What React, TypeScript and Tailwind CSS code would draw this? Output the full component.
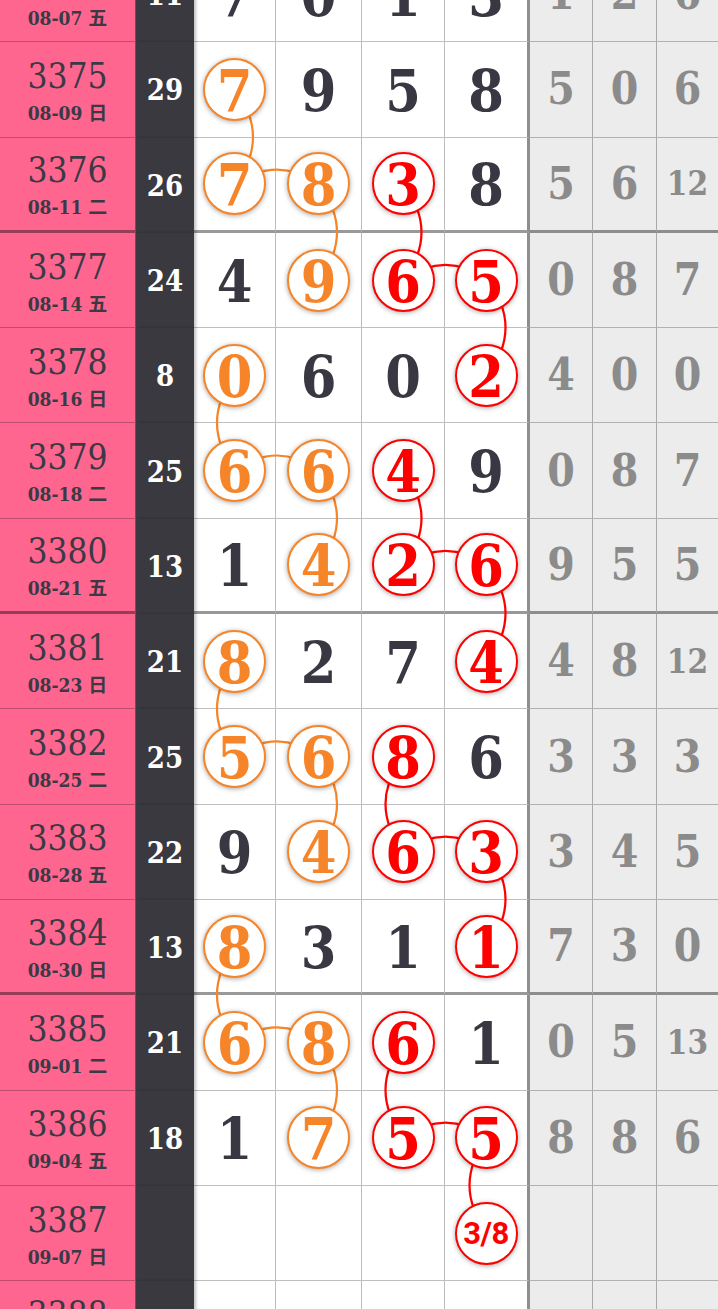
import React from 'react';

type Row = {
  n: string;
  d: string;
  s: string;
  v: string[];
  g: string[];
  o: number[];
  r: number[];
};

const rows: Row[] = [
  { n: '3374', d: '08-07 五', s: '11', v: ['7', '0', '1', '3'], g: ['1', '2', '6'], o: [], r: [] },
  { n: '3375', d: '08-09 日', s: '29', v: ['7', '9', '5', '8'], g: ['5', '0', '6'], o: [0], r: [] },
  { n: '3376', d: '08-11 二', s: '26', v: ['7', '8', '3', '8'], g: ['5', '6', '12'], o: [0, 1], r: [2] },
  { n: '3377', d: '08-14 五', s: '24', v: ['4', '9', '6', '5'], g: ['0', '8', '7'], o: [1], r: [2, 3] },
  { n: '3378', d: '08-16 日', s: '8', v: ['0', '6', '0', '2'], g: ['4', '0', '0'], o: [0], r: [3] },
  { n: '3379', d: '08-18 二', s: '25', v: ['6', '6', '4', '9'], g: ['0', '8', '7'], o: [0, 1], r: [2] },
  { n: '3380', d: '08-21 五', s: '13', v: ['1', '4', '2', '6'], g: ['9', '5', '5'], o: [1], r: [2, 3] },
  { n: '3381', d: '08-23 日', s: '21', v: ['8', '2', '7', '4'], g: ['4', '8', '12'], o: [0], r: [3] },
  { n: '3382', d: '08-25 二', s: '25', v: ['5', '6', '8', '6'], g: ['3', '3', '3'], o: [0, 1], r: [2] },
  { n: '3383', d: '08-28 五', s: '22', v: ['9', '4', '6', '3'], g: ['3', '4', '5'], o: [1], r: [2, 3] },
  { n: '3384', d: '08-30 日', s: '13', v: ['8', '3', '1', '1'], g: ['7', '3', '0'], o: [0], r: [3] },
  { n: '3385', d: '09-01 二', s: '21', v: ['6', '8', '6', '1'], g: ['0', '5', '13'], o: [0, 1], r: [2] },
  { n: '3386', d: '09-04 五', s: '18', v: ['1', '7', '5', '5'], g: ['8', '8', '6'], o: [1], r: [2, 3] },
  { n: '3387', d: '09-07 日', s: '', v: ['', '', '', '3/8'], g: ['', '', ''], o: [], r: [3] },
  { n: '3388', d: '09-09 二', s: '', v: ['', '', '', ''], g: ['', '', ''], o: [], r: [] },
];

// [fromRow, fromCol, toRow, toCol, bow]
type Seg = [number, number, number, number, 'L' | 'R' | 'U'];

const orangeSegs: Seg[] = [
  [1, 0, 2, 0, 'R'], [2, 0, 2, 1, 'U'], [2, 1, 3, 1, 'R'],
  [4, 0, 5, 0, 'L'], [5, 0, 5, 1, 'U'], [5, 1, 6, 1, 'R'],
  [7, 0, 8, 0, 'L'], [8, 0, 8, 1, 'U'], [8, 1, 9, 1, 'R'],
  [10, 0, 11, 0, 'L'], [11, 0, 11, 1, 'U'], [11, 1, 12, 1, 'R'],
];

const redSegs: Seg[] = [
  [2, 2, 3, 2, 'R'], [3, 2, 3, 3, 'U'], [3, 3, 4, 3, 'R'],
  [5, 2, 6, 2, 'R'], [6, 2, 6, 3, 'U'], [6, 3, 7, 3, 'R'],
  [8, 2, 9, 2, 'L'], [9, 2, 9, 3, 'U'], [9, 3, 10, 3, 'R'],
  [11, 2, 12, 2, 'L'], [12, 2, 12, 3, 'U'], [12, 3, 13, 3, 'L'],
];

const ROW_H = 95.3;
const TOP = -53;
const colX = [235, 319, 403.5, 487.5];
const rowY = (k: number) => TOP + ROW_H * k + 47;

const segPath = ([r1, c1, r2, c2, bow]: Seg) => {
  const x1 = colX[c1];
  const y1 = rowY(r1);
  const x2 = colX[c2];
  const y2 = rowY(r2);
  let cx = (x1 + x2) / 2;
  let cy = (y1 + y2) / 2;
  if (bow === 'R') cx += 36;
  if (bow === 'L') cx -= 36;
  if (bow === 'U') cy -= 30;
  return `M${x1} ${y1} Q${cx} ${cy} ${x2} ${y2}`;
};

const serif = "font-['DejaVu_Serif_Condensed','DejaVu_Serif',serif] font-stretch-condensed";
const whiteW = ['w-[82px]', 'w-[86px]', 'w-[83px]', 'w-[85px]'];
const grayW = ['w-[63px]', 'w-[64px]', 'w-[61px]'];

function Ball({ value, tone }: { value: string; tone: 'o' | 'r' }) {
  const ring = tone === 'o' ? 'border-[#f6852a] text-[#f6852a]' : 'border-[#ff0000] text-[#ff0000]';
  const small = value.length > 1;
  return (
    <div
      className={`relative z-20 w-[63px] h-[63px] rounded-full border-[2.5px] bg-white flex items-center justify-center shadow-[0_1px_5px_rgba(0,0,0,0.35)] ${ring}`}
    >
      {small ? (
        <span className="font-['Roboto',sans-serif] font-bold text-[31px] leading-none tracking-[-0.5px]">{value}</span>
      ) : (
        <span className={`${serif} font-bold text-[57px] leading-none mt-[2px]`}>{value}</span>
      )}
    </div>
  );
}

export default function App() {
  return (
    <div className="relative w-[718px] h-[1309px] overflow-hidden bg-white">
      <div className="mt-[-53px]">
        {rows.map((row) => {
          const thick = Number(row.n) % 4 === 0;
          const bb = thick ? 'border-b-[3px] border-b-black/40' : 'border-b border-b-black/25';
          return (
            <div key={row.n} className="flex h-[95.3px]">
              <div
                className={`w-[136px] shrink-0 bg-[#fe6690] border-r border-r-black/40 ${bb} flex flex-col items-center justify-center text-[#3b3943]`}
              >
                <span className={`${serif} text-[35px] leading-none mt-[3px]`}>{row.n}</span>
                <span className="font-['DejaVu_Serif_Condensed','DejaVu_Serif','Noto_Sans_CJK_SC',serif] font-stretch-condensed font-bold text-[19px] leading-none mt-[10px]">
                  {row.d}
                </span>
              </div>
              <div className="w-[58px] shrink-0 bg-[#3a3940] flex items-center justify-center text-white shadow-[2px_0_3px_rgba(0,0,0,0.25)] relative z-[1]">
                <span className={`${serif} font-bold text-[29px] leading-none mt-[2px]`}>{row.s}</span>
              </div>
              {row.v.map((val, i) => {
                const last = i === 3;
                const tone = row.o.includes(i) ? 'o' : row.r.includes(i) ? 'r' : null;
                return (
                  <div
                    key={i}
                    className={`${whiteW[i]} shrink-0 bg-white ${bb} ${last ? 'border-r-[3px] border-r-[#8e8e8e]' : 'border-r border-r-[#bdbdbd]'} flex items-center justify-center`}
                  >
                    {tone ? (
                      <Ball value={val} tone={tone} />
                    ) : (
                      <span className={`${serif} font-bold text-[57px] leading-none text-[#393842] mt-[2px]`}>{val}</span>
                    )}
                  </div>
                );
              })}
              {row.g.map((val, i) => (
                <div
                  key={i}
                  className={`${grayW[i]} shrink-0 bg-[#ececec] ${bb} ${i < 2 ? 'border-r border-r-[#a9a9a9]' : ''} flex items-center justify-center`}
                >
                  <span
                    className={`${serif} font-bold leading-none text-[#8b8b8b] ${val.length > 1 ? 'text-[33px]' : 'text-[44px]'}`}
                  >
                    {val}
                  </span>
                </div>
              ))}
            </div>
          );
        })}
      </div>

      <svg className="absolute left-0 top-0 z-10 pointer-events-none" width="718" height="1309" viewBox="0 0 718 1309" fill="none">
        {orangeSegs.map((s, i) => (
          <path key={`o${i}`} d={segPath(s)} stroke="#f6852a" strokeWidth="2.2" />
        ))}
        {redSegs.map((s, i) => (
          <path key={`r${i}`} d={segPath(s)} stroke="#ff0000" strokeWidth="2.2" />
        ))}
      </svg>
    </div>
  );
}
